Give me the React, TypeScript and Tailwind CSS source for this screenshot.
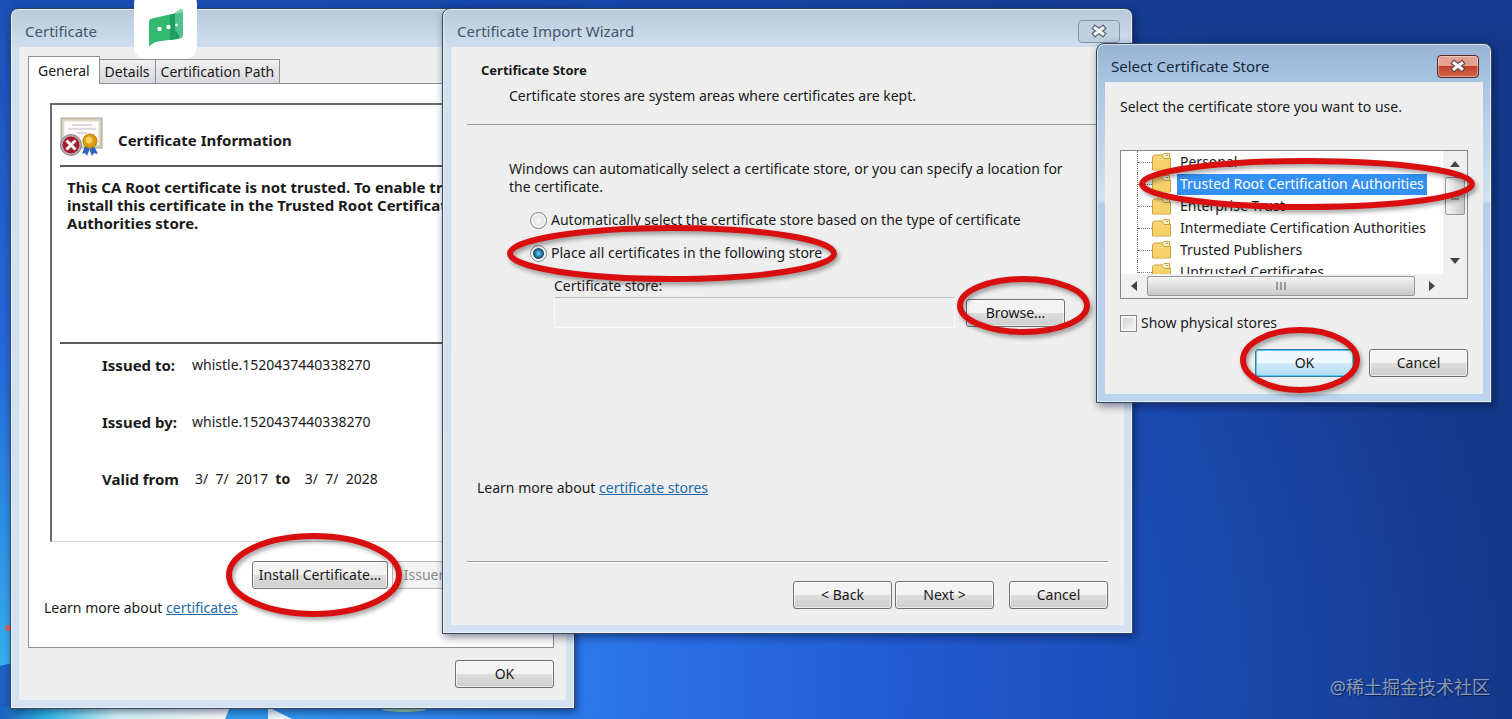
import { useState } from 'react';
import type { ReactNode } from 'react';
import clsx from 'clsx';

const stores = [
  'Personal',
  'Trusted Root Certification Authorities',
  'Enterprise Trust',
  'Intermediate Certification Authorities',
  'Trusted Publishers',
  'Untrusted Certificates',
];

interface DialogWindowProps {
  title: string;
  active?: boolean;
  closable?: boolean;
  className: string;
  children: ReactNode;
}

function DialogWindow({ title, active, closable, className, children }: DialogWindowProps) {
  return (
    <section
      aria-label={title}
      className={clsx(
        'absolute flex flex-col rounded-t-lg border border-[#33465c] px-2 pb-2 shadow-[inset_0_0_0_1px_rgba(255,255,255,0.6),2px_3px_8px_rgba(0,10,50,0.5)]',
        active
          ? 'bg-[linear-gradient(#98b4d2_0px,#a9c6e4_40px,#d3e2f1_156px,#b4cfea_160px,#bad4ee_100%)]'
          : 'bg-[linear-gradient(#b8c9db_0px,#d0e0f1_40px,#d3e1f0_100%)]',
        className
      )}
    >
      <header className="flex h-[38px] shrink-0 items-center justify-between pt-1.5 pr-1 pl-1.5">
        <h1 className={clsx('text-[15px]', active ? 'text-[#17283c]' : 'text-[#465668]')}>{title}</h1>
        {closable && (
          <button
            aria-label="Close"
            className={clsx(
              'flex h-[23px] w-[42px] items-center justify-center rounded-sm border',
              active
                ? 'border-[#5a2727] bg-linear-to-b from-[#e3a093] from-45% via-[#c1402c] via-50% to-[#d2674c] shadow-[inset_0_0_0_1px_rgba(255,255,255,0.4)]'
                : 'border-[#8494a8] bg-[#bfd0e2]'
            )}
          >
            <svg width="18" height="14" viewBox="0 0 18 14">
              <path d="M3 2.500l12 9M15 2.500l-12 9" stroke={active ? '#6d4a4a' : '#5d6774'} strokeWidth="5.500" />
              <path d="M4 3.200l10 7.600M14 3.200l-10 7.600" stroke="#f4f6f8" strokeWidth="3" />
            </svg>
          </button>
        )}
      </header>
      <div className="flex grow flex-col bg-[#eeeeee]">{children}</div>
    </section>
  );
}

interface PushButtonProps {
  children: ReactNode;
  primary?: boolean;
  disabled?: boolean;
  className?: string;
}

function PushButton({ children, primary, disabled, className = 'w-[99px]' }: PushButtonProps) {
  return (
    <button
      disabled={disabled}
      className={clsx(
        'h-7 shrink-0 rounded-[3px] border whitespace-nowrap',
        disabled && 'border-[#b5b5b5] bg-[#f3f3f3] text-[#8a8a8a]',
        primary && 'border-[#2f7fa8] bg-linear-to-b from-[#eef7fb] from-50% via-[#d3ebf6] via-50% to-[#b0dcf0] ring-1 ring-[#55c6ef] ring-inset',
        !disabled && !primary && 'border-[#707070] bg-linear-to-b from-[#f3f3f3] from-50% via-[#dedede] via-50% to-[#cdcdcd] shadow-[inset_0_0_0_1px_rgba(255,255,255,0.6)]',
        className
      )}
    >
      {children}
    </button>
  );
}

// Red marker ring that points at a control
function Ring({ className }: { className: string }) {
  return (
    <svg
      aria-hidden="true"
      className={clsx('pointer-events-none absolute overflow-visible drop-shadow-[2px_3px_2px_rgba(0,0,0,0.35)]', className)}
    >
      <ellipse cx="50%" cy="50%" rx="50%" ry="50%" fill="none" stroke="#d90f0f" strokeWidth="6" />
    </svg>
  );
}

function CertificateIcon() {
  return (
    <svg width="44" height="40" viewBox="0 0 44 40" aria-hidden="true">
      <rect x="1" y="1" width="41" height="30" fill="#d5cebd" stroke="#a9a497" />
      <rect x="4" y="4" width="35" height="24" fill="#fbfaf6" stroke="#e6e1d4" />
      <path d="M12 8h20M8 12h28M17 16h10" stroke="#bdbdc6" strokeWidth="1" />
      <path d="M25 29l-3 8 3-1 2 3 3-8zM34 29l4 8-4-1-2 3-3-8z" fill="#2f62c4" />
      <circle cx="30" cy="24" r="7" fill="#d99a12" stroke="#b87c0a" />
      <circle cx="29" cy="23" r="3.500" fill="#f6cf57" />
      <circle cx="11" cy="28" r="10.500" fill="#b9aeb0" stroke="#8f8587" />
      <circle cx="11" cy="28" r="8.500" fill="#a51c30" />
      <path d="M6.500 23.500l9 9M15.500 23.500l-9 9" stroke="#fff" strokeWidth="3" />
    </svg>
  );
}

function FolderIcon() {
  return (
    <svg width="19" height="18" viewBox="0 0 19 18" aria-hidden="true" className="shrink-0">
      <path d="M.5 17V3.500L2 2h9l1.500 2H17l1.500 1v12z" fill="#f6d677" stroke="#c9a03c" />
      <path d="M10 2.500l2-2h5.500v5H12z" fill="#fdeeb8" stroke="#c9a03c" />
      <path d="M14 2.500h2" stroke="#7da7cf" />
      <path d="M1.500 16.500V8l16-1.500v10z" fill="#f8d06a" />
    </svg>
  );
}

function AppBadge() {
  return (
    <div className="absolute -top-2 left-[134px] flex h-[67px] w-[63px] items-end justify-center rounded-xl bg-white pb-[11px]">
      <svg width="36" height="40" viewBox="0 0 36 40" aria-hidden="true">
        <path d="M1 14Q1 11 4 10.500L28 5v26L10 33.500Q4 34.500 1 39z" fill="#33b870" />
        <path d="M22 7l13-3v22q0 4-5 5l-8 1z" fill="#1f9c62" />
        <path d="M27 4.500l5-3.500q3-1 3 2v23q0 3-3 4.500-2-6-5-8z" fill="#5fcf9b" opacity=".75" />
        <circle cx="11.500" cy="21" r="2.200" fill="#fff" />
        <circle cx="20.500" cy="19" r="2.200" fill="#fff" />
        <circle cx="28.500" cy="17" r="1.500" fill="#d5f5e5" />
      </svg>
    </div>
  );
}

function Wallpaper() {
  return (
    <div className="absolute inset-0 overflow-hidden bg-[radial-gradient(ellipse_1500px_1100px_at_0px_680px,#35b4f3_0%,#2f87f0_30%,#2a6fe6_45%,#2159cf_62%,#1b4cb4_78%,#15398a_100%)]">
      <div className="absolute inset-x-0 top-0 h-12 bg-linear-to-b from-[#123f95]/50 to-transparent" />
      <div className="absolute inset-y-0 left-0 w-3 bg-linear-to-b from-[#1c50b8] via-[#2569d8] to-[#3db9f2]" />
      <svg className="absolute bottom-0 left-0" width="600" height="100" viewBox="0 0 600 100" aria-hidden="true">
        <defs>
          <linearGradient id="glow" x1="0" x2="1">
            <stop offset="0" stopColor="#1b5fc0" />
            <stop offset=".2" stopColor="#2fb9ea" />
            <stop offset=".5" stopColor="#d5f8fc" />
            <stop offset="1" stopColor="#ffffff" />
          </linearGradient>
        </defs>
        <circle cx="8" cy="9" r="3" fill="#e0624f" />
        <path d="M0 47l12-3v56H0z" fill="#1b5fc0" />
        <path d="M0 88h230l-5 12H0z" fill="url(#glow)" />
        <path d="M230 88h38l2 12h-44z" fill="#2f9df3" />
        <path d="M268 88v12h24z" fill="#f2fbff" />
        <ellipse cx="404" cy="90" rx="22" ry="3" fill="#9fd6b0" />
      </svg>
    </div>
  );
}

function CertificateDialog() {
  return (
    <DialogWindow title="Certificate" className="top-2 left-[10px] w-[565px]">
      <div className="flex flex-col pt-[9px] pr-3 pb-3 pl-[9px]">
        <nav className="relative z-10 -mb-px flex items-end" role="tablist">
          <button role="tab" aria-selected="true" className="h-7 border border-b-0 border-[#8c8e94] bg-white px-[9px]">General</button>
          <button role="tab" aria-selected="false" className="h-[25px] border border-l-0 border-[#8c8e94] bg-linear-to-b from-[#f1f1f1] to-[#d6d8dc] px-[5px]">Details</button>
          <button role="tab" aria-selected="false" className="h-[25px] border border-l-0 border-[#8c8e94] bg-linear-to-b from-[#f1f1f1] to-[#d6d8dc] px-[5px]">Certification Path</button>
        </nav>
        <div className="border border-[#8c8e94] bg-white px-[21px] pt-[19px] pb-[30px]">
          <div className="border-t-2 border-l-2 border-b border-t-[#6b6b6b] border-l-[#6b6b6b] border-b-[#d6d6d6] pt-3 pb-[53px] pl-2">
            <div className="flex items-end gap-[14px] pb-2">
              <CertificateIcon />
              <h2 className="pb-2 text-[15px] font-bold">Certificate Information</h2>
            </div>
            <div className="h-[179px] border-y-2 border-[#5a5a5a] pt-[11px] pl-[7px]">
              <p className="text-[15px] font-bold whitespace-nowrap">
                This CA Root certificate is not trusted. To enable trust,<br />
                install this certificate in the Trusted Root Certification<br />
                Authorities store.
              </p>
            </div>
            <dl className="flex flex-col gap-[39px] pt-3 pl-[42px]">
              <div className="flex gap-3">
                <dt className="w-[78px] text-[15px] font-bold">Issued to:</dt>
                <dd>whistle.1520437440338270</dd>
              </div>
              <div className="flex gap-3">
                <dt className="w-[78px] text-[15px] font-bold">Issued by:</dt>
                <dd>whistle.1520437440338270</dd>
              </div>
              <div className="flex gap-3">
                <dt className="w-[78px] text-[15px] font-bold whitespace-nowrap">Valid from</dt>
                <dd className="pl-[3px] whitespace-pre">3/  7/  2017  <b>to</b>    3/  7/  2028</dd>
              </div>
            </dl>
          </div>
          <div className="flex gap-1 pt-[19px] pl-[202px]">
            <PushButton className="w-[136px]">Install Certificate...</PushButton>
            <PushButton disabled className="w-[136px]">Issuer Statement</PushButton>
          </div>
          <p className="-ml-[6px] pt-[10px]">
            Learn more about <a href="#certificates" className="text-[#2169a8] underline">certificates</a>
          </p>
        </div>
        <div className="flex justify-end pt-3">
          <PushButton>OK</PushButton>
        </div>
      </div>
      <Ring className="top-[527px] left-[218px] h-[78px] w-[170px]" />
    </DialogWindow>
  );
}

function ImportWizard() {
  const [mode, setMode] = useState('manual');

  return (
    <DialogWindow title="Certificate Import Wizard" closable className="top-2 left-[442px] w-[691px]">
      <div className="flex flex-col px-4 pt-[14px] pb-4">
        <div className="border-b border-[#9a9a9a] pb-[19px] pl-[14px]">
          <h2 className="text-[13px] font-bold">Certificate Store</h2>
          <p className="pt-2 pl-7">Certificate stores are system areas where certificates are kept.</p>
        </div>
        <div className="pt-[35px] pl-[42px]">
          <p>
            Windows can automatically select a certificate store, or you can specify a location for
            <br />
            the certificate.
          </p>
          <div className="flex flex-col gap-[15px] pt-[15px] pl-[21px]">
            <label className="flex items-center gap-1">
              <input type="radio" name="mode" checked={mode === 'auto'} onChange={() => setMode('auto')} className="size-[17px] appearance-none rounded-full border border-[#8a8a8a] bg-radial from-[#fafafa] to-[#cfcfcf] shadow-[inset_0_0_0_2px_#f4f4f4] checked:bg-radial checked:from-[#57c0ea] checked:from-10% checked:via-[#123f66] checked:via-50% checked:to-[#e6eef4] checked:to-55%" />
              Automatically select the certificate store based on the type of certificate
            </label>
            <label className="flex items-center gap-1">
              <input type="radio" name="mode" checked={mode === 'manual'} onChange={() => setMode('manual')} className="size-[17px] appearance-none rounded-full border border-[#8a8a8a] bg-radial from-[#fafafa] to-[#cfcfcf] shadow-[inset_0_0_0_2px_#f4f4f4] checked:bg-radial checked:from-[#57c0ea] checked:from-10% checked:via-[#123f66] checked:via-50% checked:to-[#e6eef4] checked:to-55%" />
              Place all certificates in the following store
            </label>
          </div>
          <div className="pt-[15px] pl-[45px]">
            <label htmlFor="store">Certificate store:</label>
            <div className="flex items-center gap-[11px] pt-[2px]">
              <input id="store" type="text" readOnly className="h-[31px] w-[401px] border border-[#fafafa] border-t-[#bdbdbd] bg-[#eeeeee] px-1" />
              <PushButton>Browse...</PushButton>
            </div>
          </div>
        </div>
        <p className="pt-[151px] pl-[10px]">
          Learn more about <a href="#stores" className="text-[#2169a8] underline">certificate stores</a>
        </p>
        <div className="mt-16 flex justify-end gap-[3px] border-t border-[#9a9a9a] pt-[19px] shadow-[inset_0_1px_0_#fff]">
          <PushButton>&lt; Back</PushButton>
          <PushButton>Next &gt;</PushButton>
          <PushButton className="ml-3 w-[99px]">Cancel</PushButton>
        </div>
      </div>
      <Ring className="top-[219px] left-[67px] h-[51px] w-[324px]" />
      <Ring className="top-[270px] left-[517px] h-[53px] w-[127px]" />
    </DialogWindow>
  );
}

function StoreList() {
  const [selected, setSelected] = useState(1);

  return (
    <div className="flex h-[149px] flex-col border border-[#828790] bg-white">
      <div className="flex min-h-0 grow">
        <ul className="relative grow overflow-hidden pl-4">
          {stores.map((store, i) => (
            <li key={store} className="flex h-[22px] items-center border-l border-dotted border-[#777]">
              <span className="w-[14px] border-t border-dotted border-[#777]" />
              <FolderIcon />
              <button
                onClick={() => setSelected(i)}
                className={clsx('ml-[6px] h-[21px] px-[3px] whitespace-nowrap', i === selected && 'bg-[#3390f3] text-white')}
              >
                {store}
              </button>
            </li>
          ))}
        </ul>
        <div className="flex w-6 flex-col items-center bg-[#f0f0f0] py-[10px]">
          <svg width="10" height="6" aria-hidden="true"><path d="M0 6l5-6 5 6z" fill="#444" /></svg>
          <div className="mt-[10px] flex h-[38px] w-5 shrink-0 items-center justify-center rounded-xs border border-[#979797] bg-linear-to-r from-[#f5f5f5] to-[#c9c9cb]">
            <svg width="8" height="8" aria-hidden="true"><path d="M0 1h8M0 4h8M0 7h8" stroke="#555" /></svg>
          </div>
          <svg width="10" height="6" aria-hidden="true" className="mt-auto"><path d="M0 0l5 6 5-6z" fill="#444" /></svg>
        </div>
      </div>
      <div className="flex h-6 shrink-0 items-center bg-[#f0f0f0] pl-[10px]">
        <svg width="6" height="10" aria-hidden="true"><path d="M6 0L0 5l6 5z" fill="#444" /></svg>
        <div className="ml-[10px] flex h-5 w-[268px] items-center justify-center rounded-xs border border-[#979797] bg-linear-to-b from-[#f5f5f5] to-[#c9c9cb]">
          <svg width="10" height="8" aria-hidden="true"><path d="M1 0v8M5 0v8M9 0v8" stroke="#555" /></svg>
        </div>
        <svg width="6" height="10" aria-hidden="true" className="ml-[14px]"><path d="M0 0l6 5-6 5z" fill="#444" /></svg>
      </div>
    </div>
  );
}

function SelectStoreDialog() {
  return (
    <DialogWindow title="Select Certificate Store" active closable className="top-[43px] left-[1096px] w-[396px]">
      <div className="flex flex-col pt-4 pr-[15px] pb-[17px] pl-[15px]">
        <p className="pb-[34px]">Select the certificate store you want to use.</p>
        <StoreList />
        <label className="flex items-center gap-1 pt-[15px]">
          <input type="checkbox" className="size-[17px] appearance-none border border-[#8a8a8a] bg-linear-to-br from-[#cfcfcf] to-[#fafafa] shadow-[inset_0_0_0_2px_#f4f4f4] checked:bg-[#3390f3]" />
          Show physical stores
        </label>
        <div className="flex justify-end gap-[15px] pt-[17px]">
          <PushButton primary>OK</PushButton>
          <PushButton>Cancel</PushButton>
        </div>
      </div>
      <Ring className="top-[117px] left-[45px] h-[46px] w-[330px]" />
      <Ring className="top-[286px] left-[146px] h-[60px] w-[114px]" />
    </DialogWindow>
  );
}

export default function App() {
  return (
    <main className="relative h-screen min-h-[719px] overflow-hidden font-['Noto_Sans','Noto_Sans_CJK_SC',sans-serif] text-[14px] leading-[18px] text-[#1a1a1a]">
      <Wallpaper />
      <CertificateDialog />
      <ImportWizard />
      <SelectStoreDialog />
      <AppBadge />
      <p className="absolute right-[22px] bottom-5 text-[18px] leading-6 text-white/50 [text-shadow:1px_1px_1px_rgba(0,0,0,0.5)]">
        @稀土掘金技术社区
      </p>
    </main>
  );
}
